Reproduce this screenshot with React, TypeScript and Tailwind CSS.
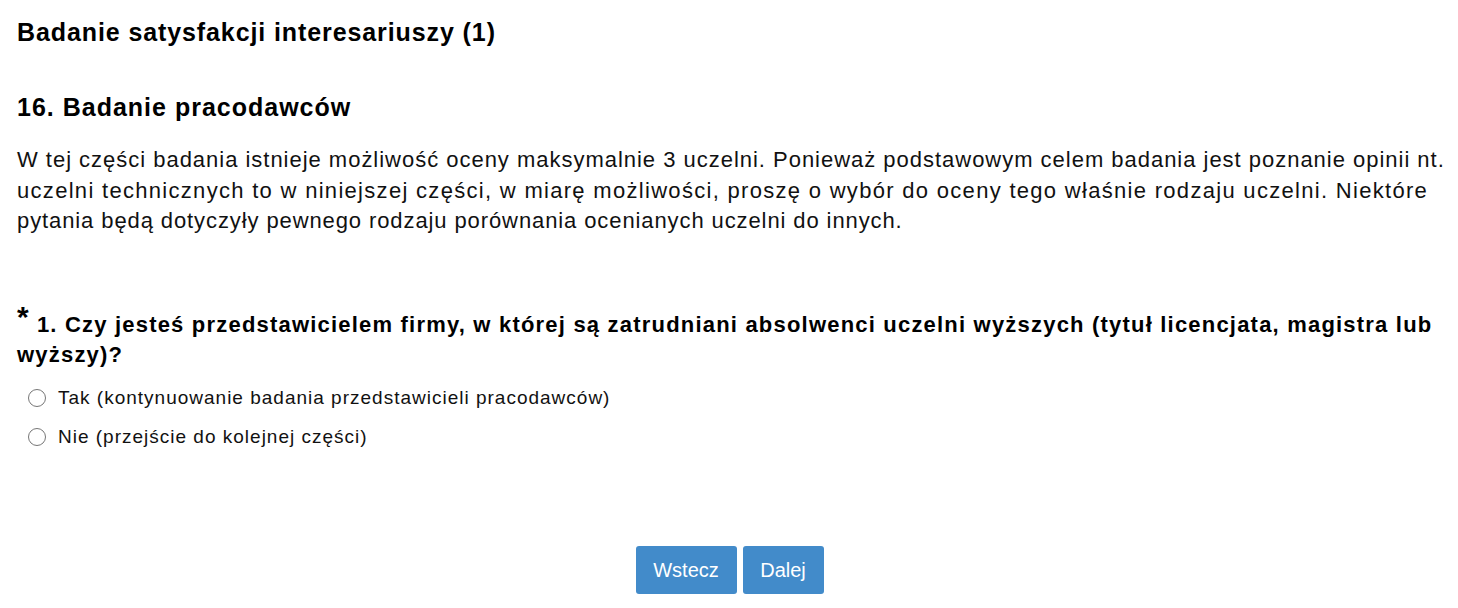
import React from "react"

function Radio({ label }: { label: string }) {
  return (
    <label className="flex items-center gap-[12px] h-[39px] pl-[11px] text-[19px] tracking-[1px] text-[#111]">
      <span className="w-[18px] h-[18px] rounded-full border border-[#767676] bg-white shrink-0" />
      <span>{label}</span>
    </label>
  )
}

export default function App() {
  return (
    <div
      className="w-[1458px] h-[608px] bg-white text-black px-[17px] overflow-hidden"
      style={{ fontFamily: '"Liberation Sans", Arial, sans-serif' }}
    >
      <h1 className="text-[25px] tracking-[0.9px] font-bold leading-[30px] pt-[17px] whitespace-nowrap">
        Badanie satysfakcji interesariuszy (1)
      </h1>
      <h2 className="text-[25px] tracking-[1px] font-bold leading-[30px] mt-[45px] whitespace-nowrap">
        16. Badanie pracodawców
      </h2>
      <p className="text-[22px] tracking-[0.98px] leading-[30.5px] mt-[23px] text-[#111] whitespace-nowrap">
        W tej części badania istnieje możliwość oceny maksymalnie 3 uczelni. Ponieważ podstawowym celem badania jest poznanie opinii nt.
        <br />
        <span className="tracking-[1.3px]">
          uczelni technicznych to w niniejszej części, w miarę możliwości, proszę o wybór do oceny tego właśnie rodzaju uczelni. Niektóre
        </span>
        <br />
        <span className="tracking-[0.9px]">
          pytania będą dotyczyły pewnego rodzaju porównania ocenianych uczelni do innych.
        </span>
      </p>
      <div className="mt-[65px] text-[22px] tracking-[1.2px] font-bold leading-[30px] whitespace-nowrap">
        <span className="text-[30px] align-[5px] mr-[7px]">*</span>
        1. Czy jesteś przedstawicielem firmy, w której są zatrudniani absolwenci uczelni wyższych (tytuł licencjata, magistra lub
        <br />
        wyższy)?
      </div>
      <div className="mt-[9px]">
        <Radio label="Tak (kontynuowanie badania przedstawicieli pracodawców)" />
        <Radio label="Nie (przejście do kolejnej części)" />
      </div>
      <div className="flex justify-center gap-[6px] mt-[89px] pl-[1px]">
        <button className="h-[48px] w-[101px] rounded-[3px] bg-[#428bca] text-white text-[20px]">Wstecz</button>
        <button className="h-[48px] w-[81px] rounded-[3px] bg-[#428bca] text-white text-[20px]">Dalej</button>
      </div>
    </div>
  )
}
